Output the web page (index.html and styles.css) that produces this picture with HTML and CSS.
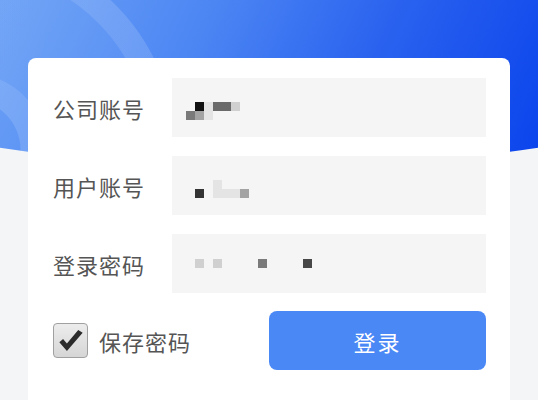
FILE: index.html
```html
<!DOCTYPE html>
<html lang="zh-CN">
<head>
  <meta charset="UTF-8" />
  <meta name="viewport" content="width=device-width, initial-scale=1.0" />
  <title>登录</title>
  <link rel="stylesheet" href="styles.css">
</head>
<body>
  <div class="header"></div>

  <div class="card">
    <div class="row">
      <span class="label">公司账号</span>
      <div class="field">
        <div class="mosaic">
          <div class="mrow"><i></i><i class="c1"></i><i class="c8"></i><i class="c4"></i><i class="c4"></i><i class="c7"></i></div>
          <div class="mrow"><i class="c5"></i><i class="c6"></i><i class="c8"></i></div>
        </div>
      </div>
    </div>

    <div class="row">
      <span class="label">用户账号</span>
      <div class="field">
        <div class="mosaic">
          <div class="mrow"><i></i><i></i><i></i><i class="c8"></i></div>
          <div class="mrow"><i></i><i class="c2"></i><i></i><i class="c8"></i><i class="c8"></i><i class="c8"></i><i class="c6"></i></div>
        </div>
      </div>
    </div>

    <div class="row">
      <span class="label">登录密码</span>
      <div class="field">
        <div class="mosaic dots">
          <div class="mrow"><i></i><i class="c7"></i><i></i><i class="c7"></i><i></i><i></i><i></i><i></i><i class="c5"></i><i></i><i></i><i></i><i></i><i class="c3"></i></div>
        </div>
      </div>
    </div>

    <div class="actions">
      <label class="remember">
        <span class="checkbox">
          <svg viewBox="0 0 24 24" width="28" height="28">
            <path d="M2 13 L8.5 20.5 L22 5 L18.2 2.5 L8.5 14.2 L5.2 10.2 Z" fill="#2b2b2b"/>
          </svg>
        </span>
        保存密码
      </label>
      <button class="login-btn">登录</button>
    </div>
  </div>
</body>
</html>
```

FILE: styles.css
```css
* {
  margin: 0;
  padding: 0;
  box-sizing: border-box;
  font-family: 'Noto Sans CJK SC', 'Noto Sans', sans-serif;
}

body {
  background-color: #f4f5f7;
  min-height: 100vh;
  overflow: hidden;
}

.header {
  height: 170px;
  margin-bottom: -112px;
  background:
    radial-gradient(circle at -30px 150px,
      transparent 50px,
      rgba(255,255,255,0.13) 51px 76px,
      rgba(255,255,255,0.04) 77px 180px,
      rgba(255,255,255,0.14) 181px 205px,
      transparent 206px),
    linear-gradient(115deg, #6da2f6 0%, #4c86f3 35%, #2a62ef 65%, #0a43ec 100%);
  clip-path: ellipse(577px 167px at 50% 0);
}

.card {
  position: relative;
  margin: 0 28px;
  background: #fff;
  border-radius: 8px 8px 0 0;
  padding: 20px 24px 40px 25px;
  display: flex;
  flex-direction: column;
  gap: 19px;
}

.row {
  display: flex;
  align-items: center;
  height: 59px;
}

.label {
  width: 119px;
  font-size: 22px;
  color: #555;
  letter-spacing: 1px;
}

.field {
  flex: 1;
  height: 59px;
  background-color: #f5f5f5;
  padding-left: 14px;
  display: flex;
  align-items: center;
}

.mosaic {
  display: flex;
  flex-direction: column;
  margin-top: 6px;
}

.mosaic.dots {
  margin-top: 0;
}

.mrow {
  display: flex;
}

.mrow i {
  display: block;
  width: 9px;
  height: 9px;
}

.c1 { background: #111; }
.c2 { background: #333; }
.c3 { background: #474747; }
.c4 { background: #6a6a6a; }
.c5 { background: #7a7a7a; }
.c6 { background: #a3a3a3; }
.c7 { background: #d0d0d0; }
.c8 { background: #e4e4e4; }

.actions {
  display: flex;
  align-items: center;
  justify-content: space-between;
  margin-top: -1px;
}

.remember {
  display: flex;
  align-items: center;
  gap: 11px;
  font-size: 22px;
  color: #555;
  letter-spacing: 1px;
}

.checkbox {
  width: 35px;
  height: 35px;
  border: 1px solid #a0a0a0;
  border-radius: 4px;
  background: linear-gradient(#ececec, #d6d6d6);
  display: flex;
  align-items: center;
  justify-content: center;
}

.login-btn {
  width: 217px;
  height: 59px;
  border: none;
  border-radius: 8px;
  background-color: #4a88f6;
  color: #fff;
  font-size: 22px;
  letter-spacing: 2px;
  cursor: pointer;
}
```
